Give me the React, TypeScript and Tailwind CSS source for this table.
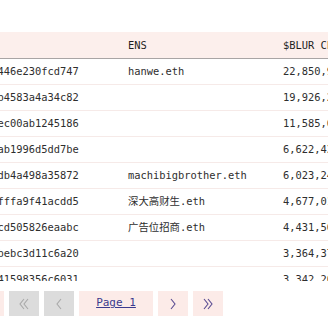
import React from 'react';

interface Holder {
    address: string;
    ens: string;
    claimed: string;
}

// 0x + 40 hex chars
const addr = (head: string, tail: string) => '0x' + head.slice(0, 27) + tail;

const holders: Holder[] = [
    { address: addr('7a1b3c9d0e5f2a4b6c8d0e1f2a3b4', '446e230fcd747'), ens: 'hanwe.eth', claimed: '22,850,914.31' },
    { address: addr('2c4e6a8b0d1f3e5a7c9b1d3f5e7a9', 'b4583a4a34c82'), ens: '', claimed: '19,926,207.88' },
    { address: addr('9e8d7c6b5a4f3e2d1c0b9a8f7e6d5', 'ec00ab1245186'), ens: '', claimed: '11,585,640.12' },
    { address: addr('4f5e6d7c8b9a0f1e2d3c4b5a6f7e8', 'ab1996d5dd7be'), ens: '', claimed: '6,622,431.70' },
    { address: addr('1a2b3c4d5e6f7a8b9c0d1e2f3a4b5', 'db4a498a35872'), ens: 'machibigbrother.eth', claimed: '6,023,248.05' },
    { address: addr('8c7b6a5f4e3d2c1b0a9f8e7d6c5b4', 'fffa9f41acdd5'), ens: '深大高财生.eth', claimed: '4,677,019.44' },
    { address: addr('3d4e5f6a7b8c9d0e1f2a3b4c5d6e7', 'cd505826eaabc'), ens: '广告位招商.eth', claimed: '4,431,562.90' },
    { address: addr('6b7c8d9e0f1a2b3c4d5e6f7a8b9c0', 'bebc3d11c6a20'), ens: '', claimed: '3,364,371.26' },
    { address: addr('0f1e2d3c4b5a6f7e8d9c0b1a2f3e4', '41598356c6031'), ens: '', claimed: '3,342,205.63' },
];

const Chevron = ({ dir, double }: { dir: 'left' | 'right'; double?: boolean }) => {
    const pts = dir === 'left' ? '5,1 1,6 5,11' : '1,1 5,6 1,11';
    return (
        <svg width={double ? 10 : 6} height="12" viewBox={double ? '0 0 10 12' : '0 0 6 12'} fill="none" stroke="currentColor" strokeWidth="1.1">
            <polyline points={pts} />
            {double && <polyline points={pts} transform="translate(4 0)" />}
        </svg>
    );
};

export default function App() {
    return (
        <div className="w-[328px] h-[320px] overflow-hidden bg-white text-[#2e2e2e]" style={{ fontFamily: '"DejaVu Sans Mono", "Noto Sans CJK SC", monospace' }}>
            <div className="mt-[32px] h-[249px] overflow-hidden">
                <table className="table-fixed border-collapse ml-[-196px] w-[667px] text-[10.4px] leading-none">
                    <colgroup>
                        <col className="w-[312px]" />
                        <col className="w-[155px]" />
                        <col className="w-[200px]" />
                    </colgroup>
                    <thead>
                        <tr className="bg-[#fcefec] border-b border-[#a9a5a5] h-[26px]">
                            <th className="px-3 text-left font-medium text-[#1f1f1f]">Address</th>
                            <th className="px-3 text-left font-medium text-[#1f1f1f]">ENS</th>
                            <th className="px-3 text-left font-medium text-[#1f1f1f] whitespace-nowrap">$BLUR CLAIMED</th>
                        </tr>
                    </thead>
                    <tbody>
                        {holders.map((h) => (
                            <tr key={h.address} className="border-b border-[#f6eae8] h-[26px]">
                                <td className="px-3 whitespace-nowrap">{h.address}</td>
                                <td className="px-3 whitespace-nowrap">{h.ens}</td>
                                <td className="px-3 whitespace-nowrap">{h.claimed}</td>
                            </tr>
                        ))}
                    </tbody>
                </table>
            </div>

            <div className="mt-[10px] flex items-center gap-[5px] ml-[-25px]">
                <div className="w-[29px] h-[25px] bg-[#fcebe8]" />
                <button className="w-[30px] h-[25px] bg-[#dcdcdc] text-[#a9a9a9] flex items-center justify-center">
                    <Chevron dir="left" double />
                </button>
                <button className="w-[30px] h-[25px] bg-[#dcdcdc] text-[#a9a9a9] flex items-center justify-center">
                    <Chevron dir="left" />
                </button>
                <button className="w-[74px] h-[25px] bg-[#fcebe8] text-[#3b3a8e] text-[11px] underline flex items-center justify-center">
                    Page 1
                </button>
                <button className="w-[30px] h-[25px] bg-[#fcebe8] text-[#5a4c92] flex items-center justify-center">
                    <Chevron dir="right" />
                </button>
                <button className="w-[30px] h-[25px] bg-[#fcebe8] text-[#5a4c92] flex items-center justify-center">
                    <Chevron dir="right" double />
                </button>
            </div>
        </div>
    );
}
